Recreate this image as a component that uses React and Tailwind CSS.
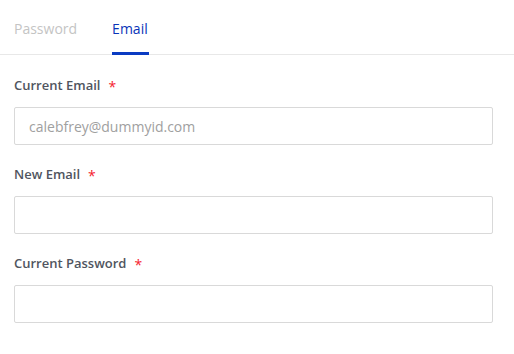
import React from "react";

function Field({ label, placeholder, type = "text" }) {
  return (
    <div className="flex flex-col">
      <label className="flex items-center h-[20px] text-[13px] font-semibold text-[#505560]">
        {label}
        <span className="ml-[8px] text-[#f5222d] font-normal text-[14px]">*</span>
      </label>
      <input
        type={type}
        placeholder={placeholder}
        className="mt-[11px] h-[38px] w-full rounded-[2px] border border-[#d9d9d9] bg-white px-[14px] text-[14px] text-[#333] placeholder:text-[#a0a0a0] outline-none"
      />
    </div>
  );
}

export default function App() {
  return (
    <div
      className="w-[514px] h-[354px] bg-white"
      style={{ fontFamily: '"Open Sans", sans-serif' }}
    >
      <div className="flex h-[55px] border-b border-[#e8e8e8] px-[14px]">
        <div className="flex items-center pt-[3px] text-[14px] text-[#c4c4c4]">Password</div>
        <div className="relative ml-[35px] flex items-center pt-[3px] text-[14px] font-medium text-[#0a34b8]">
          Email
          <div className="absolute bottom-[-1px] left-0 right-[-1px] h-[3px] bg-[#0a3bc2]" />
        </div>
      </div>
      <div className="flex w-[493px] flex-col gap-[20px] pl-[14px] pt-[21px]">
        <Field label="Current Email" placeholder="calebfrey@dummyid.com" />
        <Field label="New Email" />
        <Field label="Current Password" type="password" />
      </div>
    </div>
  );
}
